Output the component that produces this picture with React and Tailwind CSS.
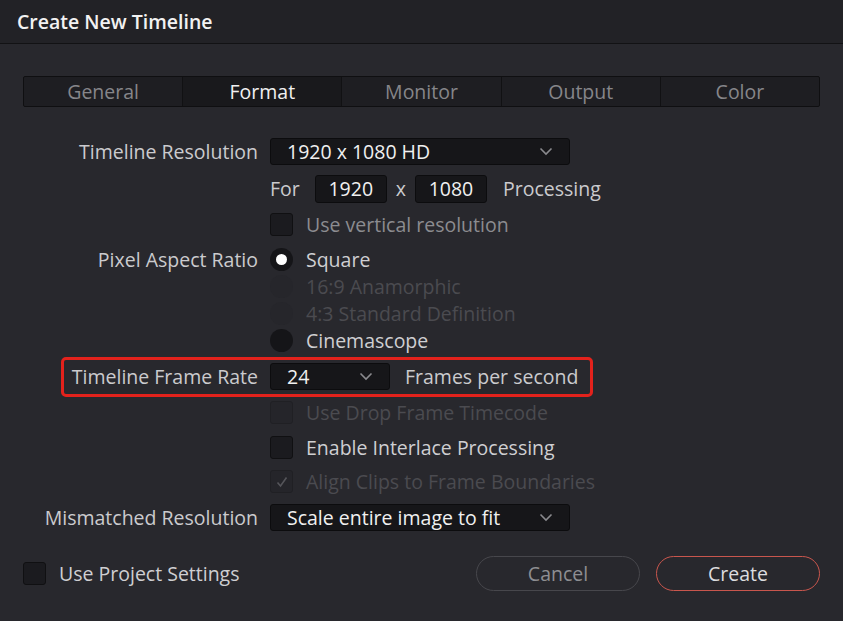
import React from 'react';

const font = { fontFamily: '"Open Sans", "Noto Sans", sans-serif' };

const Chevron = () => (
    <svg width="14" height="9" viewBox="0 0 14 9" className="shrink-0">
        <path d="M1.5 1.5 L7 7 L12.5 1.5" fill="none" stroke="#8a8a8e" strokeWidth="1.6" />
    </svg>
);

const Dropdown = ({ value, width }) => (
    <div className={`flex items-center justify-between h-[27px] pl-4 pr-4 bg-[#161619] border border-[#0c0c0e] rounded-[3px] text-[#f0f0f0] ${width}`}>
        <span>{value}</span>
        <Chevron />
    </div>
);

const Checkbox = ({ disabled, checked }) => (
    <div className={`w-[23px] h-[23px] rounded-[3px] border flex items-center justify-center ${disabled ? 'bg-[#25252a] border-[#202024]' : 'bg-[#1b1b1f] border-[#101012]'}`}>
        {checked && (
            <svg width="14" height="14" viewBox="0 0 14 14">
                <path d="M2.5 7.5 L5.5 11 L11.5 2.5" fill="none" stroke="#55555a" strokeWidth="1.6" />
            </svg>
        )}
    </div>
);

const Radio = ({ disabled, selected }) => (
    <div className={`w-[23px] h-[23px] rounded-full flex items-center justify-center ${disabled ? 'bg-[#26262b]' : 'bg-[#151518]'}`}>
        {selected && <div className="w-[11px] h-[11px] rounded-full bg-white" />}
    </div>
);

const Row = ({ label, className = '', children }) => (
    <div className={`flex items-center h-[27px] ${className}`}>
        <div className="w-[258px] text-right text-[#cbcbce] shrink-0 whitespace-nowrap">{label}</div>
        <div className="flex items-center ml-3 whitespace-nowrap">{children}</div>
    </div>
);

const tones = {
    normal: 'text-[#cfcfd2]',
    muted: 'text-[#8c8c90]',
    disabled: 'text-[#4b4b50]',
};

const Option = ({ control, text, tone = 'normal' }) => (
    <div className="flex items-center">
        {control}
        <span className={`ml-[13px] ${tones[tone]}`}>{text}</span>
    </div>
);

const tabs = ['General', 'Format', 'Monitor', 'Output', 'Color'];

export default function App() {
    return (
        <div className="w-[843px] h-[621px] bg-[#28282d] flex flex-col text-[19.5px] leading-none overflow-hidden" style={font}>
            <div className="h-[44px] shrink-0 bg-[#222226] border-b border-[#121214] flex items-center pl-[17px]">
                <span className="text-[19.5px] font-semibold text-[#f2f2f2]">Create New Timeline</span>
            </div>

            <div className="flex flex-col px-[23px]">
                <div className="mt-[32px] h-[31px] flex bg-[#1e1e22] border border-[#0f0f11] rounded-[2px]">
                    {tabs.map((t, i) => (
                        <div
                            key={t}
                            className={`flex-1 flex items-center justify-center ${i > 0 ? 'border-l border-[#111113]' : ''} ${t === 'Format' ? 'bg-[#19191c] text-[#f0f0f0]' : 'text-[#86868a]'}`}
                        >
                            {t}
                        </div>
                    ))}
                </div>
            </div>

            <div className="flex flex-col">
                <Row label="Timeline Resolution" className="mt-[31px]">
                    <Dropdown value="1920 x 1080 HD" width="w-[300px]" />
                </Row>

                <Row label="" className="mt-[10px]">
                    <span className="text-[#cbcbce]">For</span>
                    <div className="ml-[15px] w-[72px] h-[28px] flex items-center justify-center bg-[#161619] border border-[#0c0c0e] rounded-[3px] text-[#f0f0f0]">1920</div>
                    <span className="mx-[9px] text-[#cbcbce]">x</span>
                    <div className="w-[72px] h-[28px] flex items-center justify-center bg-[#161619] border border-[#0c0c0e] rounded-[3px] text-[#f0f0f0]">1080</div>
                    <span className="ml-[16px] text-[#cbcbce]">Processing</span>
                </Row>

                <Row label="" className="mt-[9px]">
                    <Option control={<Checkbox />} text="Use vertical resolution" tone="muted" />
                </Row>

                <Row label="Pixel Aspect Ratio" className="mt-[8px]">
                    <Option control={<Radio selected />} text="Square" />
                </Row>
                <Row label="">
                    <Option control={<Radio disabled />} text="16:9 Anamorphic" tone="disabled" />
                </Row>
                <Row label="">
                    <Option control={<Radio disabled />} text="4:3 Standard Definition" tone="disabled" />
                </Row>
                <Row label="">
                    <Option control={<Radio />} text="Cinemascope" />
                </Row>

                <div className="relative mt-[9px]">
                    <Row label="Timeline Frame Rate">
                        <Dropdown value="24" width="w-[120px]" />
                        <span className="ml-[15px] text-[#cbcbce]">Frames per second</span>
                    </Row>
                    <div className="absolute left-[61px] top-[-6px] w-[532px] h-[40px] border-[3px] border-[#e3221c] rounded-[5px] pointer-events-none" />
                </div>

                <Row label="" className="mt-[9px]">
                    <Option control={<Checkbox disabled />} text="Use Drop Frame Timecode" tone="disabled" />
                </Row>
                <Row label="" className="mt-[8px]">
                    <Option control={<Checkbox />} text="Enable Interlace Processing" />
                </Row>
                <Row label="" className="mt-[7px]">
                    <Option control={<Checkbox disabled checked />} text="Align Clips to Frame Boundaries" tone="disabled" />
                </Row>

                <Row label="Mismatched Resolution" className="mt-[9px]">
                    <Dropdown value="Scale entire image to fit" width="w-[300px]" />
                </Row>
            </div>

            <div className="mt-[25px] flex items-center px-[23px]">
                <Checkbox />
                <span className="ml-[13px] text-[#cfcfd2]">Use Project Settings</span>
                <div className="ml-auto flex gap-4">
                    <button className="w-[164px] h-[35px] rounded-full border border-[#47474c] text-[#8e8e92]">Cancel</button>
                    <button className="w-[164px] h-[35px] rounded-full border border-[#c9564d] text-[#dcdcdf]">Create</button>
                </div>
            </div>
        </div>
    );
}
